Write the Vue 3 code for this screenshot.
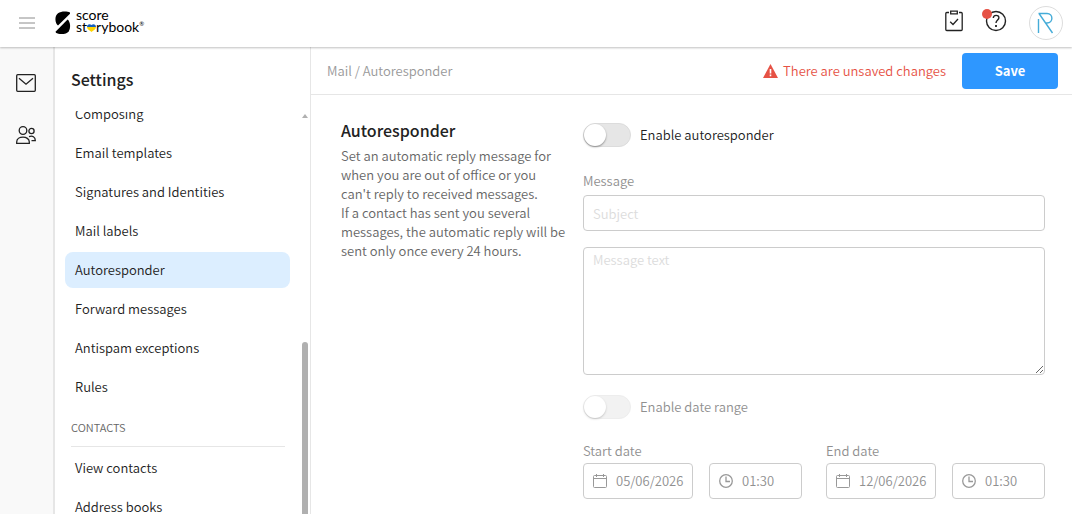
<template>
  <div class="app">
    <header class="topbar">
      <button class="icon-button menu-button" aria-label="Menu">
        <svg width="16" height="12" viewBox="0 0 16 12">
          <path d="M0 1h16M0 6h16M0 11h16" stroke="#8c8c8c" />
        </svg>
      </button>
      <a href="#" class="logo">
        <svg width="16" height="24" viewBox="0 0 16 24">
          <path d="M15 1.500C12 .2 6 .2 3 2.200C.2 4.200-.2 9 1.200 12.200C1.600 13.200 2.300 14 3 14.600L15 2.800Z" />
          <path d="M12.600 8.600C15.600 11 15.800 17 13.800 20.200C11.800 23.400 4.500 24 .8 21.800V20.400Z" />
        </svg>
        <span class="logo-text">
          <span>score</span>
          <span class="logo-line">st<svg width="9" height="8" viewBox="0 0 9 8"><path d="M0 3C0 0 3-.5 4.500 1C6-.5 9 0 9 3Z" fill="#1560bd" /><path d="M0 3H9C9 5 6.500 6.500 4.500 8C2.500 6.500 0 5 0 3Z" fill="#ffd500" /></svg>rybook<sup>®</sup></span>
        </span>
      </a>
      <div class="actions">
        <button class="icon-button" aria-label="Tasks">
          <svg width="18" height="22" viewBox="0 0 18 22" fill="none" stroke="#222" stroke-width="1.300">
            <path d="M4 2.500H1.800Q.8 2.500 .8 3.500V19.500Q.8 20.500 1.800 20.500H16.200Q17.200 20.500 17.200 19.500V3.500Q17.200 2.500 16.200 2.500H14" />
            <path d="M5.700 1.200H12.300V3.800H5.700Z" />
            <path d="M5.200 11.800L8 14.500L13 9" />
          </svg>
        </button>
        <button class="icon-button help" aria-label="Help">
          <svg width="22" height="22" viewBox="0 0 22 22" fill="none" stroke="#222" stroke-width="1.400">
            <circle cx="11" cy="11" r="9.500" />
            <path d="M8.300 8C8.300 4.500 13.900 4.500 13.900 7.700C13.900 10 11 10 11 13" />
            <path d="M11 15V17" stroke-width="1.800" />
          </svg>
          <span class="dot"></span>
        </button>
        <button class="avatar" aria-label="Account">
          <svg width="18" height="22" viewBox="0 0 18 22" fill="none" stroke="#45acd8" stroke-width="1.400">
            <path d="M1.500 21V7M1.500 1.500H10C16.500 1.500 16.500 11 10 11H8M2 1.500L15.500 21" />
          </svg>
        </button>
      </div>
    </header>

    <div class="body">
      <nav class="rail">
        <a href="#" aria-label="Mail">
          <svg width="20" height="18" viewBox="0 0 20 18" fill="none" stroke="#222" stroke-width="1.300">
            <rect x=".7" y=".7" width="18.600" height="16.600" rx="1" />
            <path d="M3 4.200L10 10.200L17 4.200" />
          </svg>
        </a>
        <a href="#" aria-label="Contacts">
          <svg width="20" height="18" viewBox="0 0 20 18" fill="none" stroke="#222" stroke-width="1.300">
            <circle cx="7" cy="4.500" r="3.800" />
            <circle cx="15.500" cy="5" r="2.600" />
            <path d="M.7 17.300V16C.7 9.500 13.300 9.500 13.300 16V17.300Z" />
            <path d="M13 10.700C16.500 9.300 19.300 11 19.300 14.600H15.500" />
          </svg>
        </a>
      </nav>

      <aside class="sidebar">
        <h1>Settings</h1>
        <div class="sidebar-body">
          <div ref="list" class="list">
            <a
              v-for="item in mailItems"
              :key="item"
              href="#"
              class="item"
              :class="{ active: item === current }"
            >{{ item }}</a>
            <h2>CONTACTS</h2>
            <a v-for="item in contactItems" :key="item" href="#" class="item">{{ item }}</a>
          </div>
          <div class="scrollbar">
            <span class="arrow"></span>
            <span class="thumb"></span>
          </div>
        </div>
      </aside>

      <main class="content">
        <div class="content-header">
          <span class="breadcrumb">Mail / Autoresponder</span>
          <span class="warning">
            <svg width="15" height="14" viewBox="0 0 15 14">
              <path d="M7.500 0L15 14H0Z" fill="#e65245" />
              <path d="M7.500 5V9.500M7.500 10.600V12.200" stroke="#fff" stroke-width="1.600" />
            </svg>
            There are unsaved changes
          </span>
          <button class="save">Save</button>
        </div>

        <section class="section">
          <div class="intro">
            <h2>Autoresponder</h2>
            <p>Set an automatic reply message for when you are out of office or you can't reply to received messages.<br>If a contact has sent you several messages, the automatic reply will be sent only once every 24 hours.</p>
          </div>

          <form class="form" @submit.prevent>
            <label class="toggle">
              <input v-model="enabled" type="checkbox">
              Enable autoresponder
            </label>
            <label class="label message-label" for="subject">Message</label>
            <input id="subject" v-model="subject" class="field" type="text" placeholder="Subject">
            <textarea v-model="message" class="field" placeholder="Message text" aria-label="Message text"></textarea>
            <label class="toggle disabled">
              <input v-model="rangeEnabled" type="checkbox" disabled>
              Enable date range
            </label>
            <div class="dates">
              <div v-for="range in ranges" :key="range.id">
                <label class="label" :for="range.id">{{ range.label }}</label>
                <div class="date-row">
                  <div class="field picker">
                    <svg width="14" height="14" viewBox="0 0 14 14" fill="none" stroke="#999">
                      <path d="M1.500 1.500H12.500Q13.500 1.500 13.500 2.500V12.500Q13.500 13.500 12.500 13.500H1.500Q.5 13.500 .5 12.500V2.500Q.5 1.500 1.500 1.500ZM.5 4.500H13.500M3.500 0V3M10.500 0V3" />
                    </svg>
                    <input :id="range.id" v-model="range.date" type="text" disabled>
                  </div>
                  <div class="field picker">
                    <svg width="14" height="14" viewBox="0 0 14 14" fill="none" stroke="#999" stroke-width="1.300">
                      <circle cx="7" cy="7" r="6.300" />
                      <path d="M7 2.500V7.500H11" />
                    </svg>
                    <input v-model="range.time" type="text" :aria-label="range.label + ' time'" disabled>
                  </div>
                </div>
              </div>
            </div>
          </form>
        </section>
      </main>
    </div>
  </div>
</template>

<script setup>
import { ref, onMounted } from 'vue';

const current = 'Autoresponder';
const mailItems = [
  'Composing',
  'Email templates',
  'Signatures and Identities',
  'Mail labels',
  'Autoresponder',
  'Forward messages',
  'Antispam exceptions',
  'Rules',
];
const contactItems = ['View contacts', 'Address books'];

const list = ref(null);
const enabled = ref(false);
const rangeEnabled = ref(false);
const subject = ref('');
const message = ref('');
const ranges = ref([
  { id: 'start', label: 'Start date', date: '05/06/2026', time: '01:30' },
  { id: 'end', label: 'End date', date: '12/06/2026', time: '01:30' },
]);

onMounted(() => {
  list.value.scrollTop = 15;
});
</script>

<style>
body {
  background: #fff;
}
</style>

<style scoped>
* {
  box-sizing: border-box;
}

.app {
  display: flex;
  flex-direction: column;
  height: 100vh;
  overflow: hidden;
  font-family: 'Noto Sans CJK JP', 'Noto Sans', sans-serif;
  font-size: 13px;
  font-weight: 350;
  line-height: 20px;
  color: #222;
}

a {
  color: inherit;
  text-decoration: none;
}

button,
input,
textarea {
  font: inherit;
  color: inherit;
}

h1,
h2,
p {
  margin: 0;
}

svg {
  flex: none;
}

.topbar {
  position: relative;
  z-index: 1;
  display: flex;
  align-items: center;
  flex: none;
  height: 47px;
  padding: 0 9px 2px 19px;
  background: #fff;
  box-shadow: 0 1px 2px rgba(0, 0, 0, 0.25);
}

.icon-button {
  display: flex;
  padding: 0;
  border: 0;
  background: none;
}

.logo {
  display: flex;
  align-items: center;
  gap: 5px;
  margin-left: 20px;
  color: #000;
}

.logo-text {
  display: flex;
  flex-direction: column;
  padding-bottom: 4px;
  font-family: Lato, sans-serif;
  font-size: 14px;
  font-weight: 400;
  line-height: 12px;
}

.logo-line {
  display: flex;
  align-items: baseline;
}

.logo-line sup {
  align-self: flex-start;
  font-size: 6px;
  line-height: 6px;
}

.actions {
  display: flex;
  align-items: center;
  gap: 22px;
  margin-left: auto;
}

.actions .icon-button {
  padding-bottom: 4px;
}

.help {
  position: relative;
}

.dot {
  position: absolute;
  top: -1px;
  left: -3px;
  width: 10px;
  height: 10px;
  border-radius: 50%;
  background: #e65245;
}

.avatar {
  display: flex;
  align-items: center;
  justify-content: center;
  width: 34px;
  height: 34px;
  padding: 0;
  border: 1px solid #ddd;
  border-radius: 50%;
  background: #fff;
}

.body {
  display: flex;
  flex: 1;
  min-height: 0;
}

.rail {
  display: flex;
  flex: none;
  flex-direction: column;
  align-items: flex-start;
  gap: 34px;
  width: 55px;
  padding: 27px 0 0 16px;
  border-right: 2px solid #e6e6e6;
  background: #f9f9f9;
}

.rail a {
  display: flex;
}

.sidebar {
  display: flex;
  flex: none;
  flex-direction: column;
  width: 256px;
  border-right: 1px solid #e6e6e6;
}

.sidebar h1 {
  padding: 20px 16px;
  font-size: 16px;
  line-height: 24px;
  font-weight: 500;
}

.sidebar-body {
  display: flex;
  flex: 1;
  justify-content: space-between;
  min-height: 0;
}

.list {
  display: flex;
  flex-direction: column;
  gap: 3px;
  width: 235px;
  padding: 0 0 16px 10px;
  overflow: hidden;
}

.item {
  flex: none;
  padding: 8px 10px;
  border-radius: 8px;
}

.item.active {
  background: #dceeff;
}

.list h2 {
  flex: none;
  margin: 0 5px 0 6px;
  padding: 9px 0;
  border-bottom: 1px solid #e6e6e6;
  font-size: 11px;
  font-weight: inherit;
  color: #666;
}

.scrollbar {
  display: flex;
  flex-direction: column;
  width: 6px;
  margin-right: 2px;
}

.arrow {
  margin-top: 3px;
  border: 3px solid transparent;
  border-top: 0;
  border-bottom: 4px solid #b0b0b0;
}

.thumb {
  flex: 1;
  margin-top: 224px;
  border-radius: 3px 3px 0 0;
  background: #b0b0b0;
}

.content {
  flex: 1;
  min-width: 0;
}

.content-header {
  display: flex;
  align-items: center;
  height: 48px;
  padding: 0 14px 0 16px;
  border-bottom: 1px solid #e6e6e6;
}

.breadcrumb {
  color: #999;
}

.warning {
  display: flex;
  align-items: center;
  gap: 5px;
  margin-left: auto;
  color: #e65245;
}

.save {
  width: 96px;
  height: 36px;
  margin-left: 16px;
  border: 0;
  border-radius: 4px;
  background: #2e97ff;
  color: #fff;
  font-weight: 700;
}

.section {
  display: grid;
  grid-template-columns: 226px 1fr;
  gap: 16px;
  padding: 28px 27px 15px 30px;
}

.intro h2 {
  margin-bottom: 9px;
  font-size: 16px;
  line-height: 14px;
  font-weight: 500;
}

.intro p {
  line-height: 19px;
  color: #666;
}

.form {
  display: flex;
  flex-direction: column;
}

.toggle {
  display: flex;
  align-items: center;
  gap: 9px;
}

.toggle input {
  appearance: none;
  width: 48px;
  height: 24px;
  margin: 0;
  border: 1px solid #dcdcdc;
  border-radius: 12px;
  background: #e6e6e6;
}

.toggle input::before {
  content: '';
  display: block;
  width: 22px;
  height: 22px;
  border-radius: 50%;
  background: #fff;
  box-shadow: 0 1px 2px rgba(0, 0, 0, 0.4);
}

.toggle input:checked::before {
  margin-left: auto;
}

.toggle.disabled {
  margin-top: 20px;
  color: #909090;
}

.toggle.disabled input {
  opacity: 0.5;
}

.label {
  display: block;
  color: #909090;
}

.message-label {
  margin: 24px 0 4px;
}

.field {
  width: 100%;
  height: 36px;
  padding: 0 9px;
  border: 1px solid #ccc;
  border-radius: 4px;
  background: #fff;
}

.field::placeholder {
  color: #dcdcdc;
}

textarea.field {
  display: block;
  height: 128px;
  margin-top: 16px;
  padding-top: 2px;
}

.dates {
  display: grid;
  grid-template-columns: 1fr 1fr;
  gap: 24px;
  margin-top: 22px;
}

.date-row {
  display: grid;
  grid-template-columns: 110px 1fr;
  gap: 16px;
  margin-top: 2px;
}

.picker {
  display: flex;
  align-items: center;
  gap: 9px;
  padding-right: 0;
}

.picker input {
  width: 100%;
  min-width: 0;
  padding: 0;
  border: 0;
  background: none;
  color: #909090;
}
</style>
